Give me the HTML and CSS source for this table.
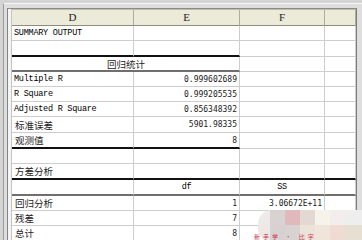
FILE: index.html
```html
<!DOCTYPE html>
<html lang="zh-CN">
<head>
<meta charset="utf-8">
<title>SUMMARY OUTPUT</title>
<link rel="stylesheet" href="styles.css">
</head>
<body>
<div class="screen">
  <div class="win">
    <div class="sheet">
      <div class="grid">
        <div class="hd">D</div><div class="hd">E</div><div class="hd">F</div><div class="hd"></div>

        <div class="c en">SUMMARY OUTPUT</div><div class="c"></div><div class="c"></div><div class="c"></div>

        <div class="c bk"></div><div class="c bk"></div><div class="c"></div><div class="c"></div>

        <div class="c cn m span2 gy">回归统计</div><div class="c"></div><div class="c"></div>

        <div class="c en">Multiple R</div><div class="c num r">0.999602689</div><div class="c"></div><div class="c"></div>
        <div class="c en">R Square</div><div class="c num r">0.999205535</div><div class="c"></div><div class="c"></div>
        <div class="c en">Adjusted R Square</div><div class="c num r">0.856348392</div><div class="c"></div><div class="c"></div>
        <div class="c cn">标准误差</div><div class="c num r">5901.98335</div><div class="c"></div><div class="c"></div>
        <div class="c cn bk">观测值</div><div class="c num r bk">8</div><div class="c"></div><div class="c"></div>

        <div class="c"></div><div class="c"></div><div class="c"></div><div class="c"></div>

        <div class="c cn bk">方差分析</div><div class="c bk"></div><div class="c bk"></div><div class="c bk"></div>

        <div class="c gy"></div><div class="c en m gy">df</div><div class="c en m gy">SS</div><div class="c gy"></div>

        <div class="c cn">回归分析</div><div class="c num r">1</div><div class="c num r">3.06672E+11</div><div class="c"></div>
        <div class="c cn">残差</div><div class="c num r">7</div><div class="c"></div><div class="c"></div>
        <div class="c cn">总计</div><div class="c num r">8</div><div class="c"></div><div class="c"></div>
      </div>
    </div>
  </div>

  <div class="mosaic">
    <span class="px" style="background:#efeaea"></span>
    <span class="px" style="background:#d9d2d2"></span>
    <span class="px" style="background:#dfb9bb"></span>
    <span class="px" style="background:#e3d9d2"></span>
    <span class="px" style="background:#f6f4ea"></span>
    <span class="px" style="background:#f3eded"></span>
    <span class="px" style="background:#eeeeee"></span>
    <span class="px" style="background:#efe6e6"></span>
    <span class="px" style="background:#d7d1d3"></span>
    <span class="px" style="background:#d8d2d2"></span>
    <span class="px" style="background:#ece2d8"></span>
    <span class="px" style="background:#efe5da"></span>
    <span class="px" style="background:#efdbd2"></span>
    <span class="px" style="background:#e7e0d2"></span>
  </div>
  <div class="wm">新手学 · 比字</div>
</div>
</body>
</html>
```

FILE: styles.css
```css
* { box-sizing: border-box; }

html, body {
  margin: 0;
  padding: 0;
  background: #d6d6d6;
}

.screen {
  position: relative;
  width: 362px;
  height: 240px;
  overflow: hidden;
  background: #d4d4d4;
  padding: 3px 0 0 3px;
}

.win {
  height: 100%;
  background: #dedede;
  border-left: 1px solid #9a9a9a;
  border-top: 1px solid #f6f6f6;
  padding: 4px 0 0 3px;
}

.sheet {
  height: 100%;
  width: 350px;
  background: #f4f4f4;
  border-left: 1px solid #858585;
  border-top: 1px solid #8a8a8a;
  border-right: 1px solid #7c7c7c;
  padding-left: 3px;
}

.grid {
  display: grid;
  grid-template-columns: 122px 106px 85px 31px;
  grid-template-rows: 16px 15px 16px 15px 15px 15px 15px 16px 16px 15px 16px 16px 15px 15px 15px;
  width: 345px;
  background: #fff;
  border-left: 1px solid #c4c4c4;
  border-top: 1px solid #bdbbaa;
}

.hd {
  background: #ecead9;
  border-right: 1px solid #aeab98;
  border-bottom: 1px solid #8e8c7d;
  font-family: "Liberation Serif", serif;
  font-size: 11px;
  line-height: 15px;
  color: #222;
  text-align: center;
}

.c {
  display: flex;
  align-items: center;
  padding: 0 2px;
  border-right: 1px solid #cdcdcd;
  border-bottom: 1px solid #cdcdcd;
  color: #111;
  white-space: nowrap;
  overflow: hidden;
}

.en {
  font-family: "Liberation Mono", monospace;
  font-size: 8.5px;
  letter-spacing: -0.25px;
  color: #000;
  padding-left: 2px;
}

.num {
  font-family: "DejaVu Sans Mono", monospace;
  font-size: 8px;
  color: #1a1a1a;
}

.cn {
  font-family: "Noto Sans CJK SC", sans-serif;
  font-size: 9.5px;
  color: #1a1a1a;
  padding-left: 3px;
}

.r { justify-content: flex-end; }
.m { justify-content: center; }
.span2 { grid-column: span 2; }

.bk { border-bottom: 2px solid #111; }
.gy { border-bottom: 2px solid #6f6f6f; }

.mosaic {
  position: absolute;
  left: 258px;
  top: 210px;
  width: 108px;
  height: 32px;
  display: grid;
  grid-template-columns: 12px 15px 15px 15px 15px 15px 21px;
  grid-template-rows: 15px 17px;
  border-radius: 14px 0 0 14px;
  overflow: hidden;
}

.px { display: block; }

.wm {
  position: absolute;
  left: 254px;
  top: 233px;
  font-family: "Noto Sans CJK SC", sans-serif;
  font-size: 6px;
  line-height: 7px;
  color: #c8344a;
  letter-spacing: 3px;
}
```
